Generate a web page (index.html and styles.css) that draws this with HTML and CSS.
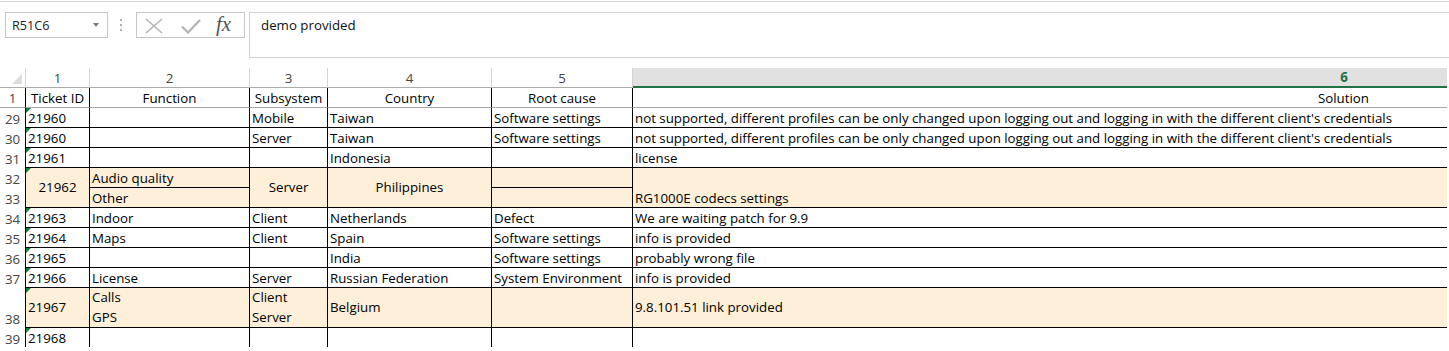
FILE: index.html
```html
<!DOCTYPE html>
<html>
<head>
<meta charset="utf-8">
<link rel="stylesheet" href="styles.css">
</head>
<body>
<div class="topline"></div>
<div class="fbar">
  <div class="namebox"><span>R51C6</span><span class="caret"></span></div>
  <div class="grip"><i></i><i></i><i></i></div>
  <div class="btns">
    <svg class="ico-x" width="18" height="16" viewBox="0 0 18 16"><path d="M1 1 L17 15 M17 1 L1 15" stroke="#b4b4b4" stroke-width="1.6" fill="none"/></svg>
    <svg class="ico-ok" width="20" height="16" viewBox="0 0 20 16"><path d="M1 8.5 L7 14.5 L19 2" stroke="#b4b4b4" stroke-width="2.3" fill="none"/></svg>
    <span class="fx">fx</span>
  </div>
  <div class="finput">demo provided</div>
</div>
<div class="sheet">
  <div class="grid">
    <div class="corner"><span class="corner-tri"></span></div>
    <div class="ch">1</div>
    <div class="ch">2</div>
    <div class="ch">3</div>
    <div class="ch">4</div>
    <div class="ch">5</div>
    <div class="ch sel">6</div>

    <div class="rh r1">1</div>
    <div class="c r1 hc">Ticket ID</div>
    <div class="c r1 hc">Function</div>
    <div class="c r1 hc">Subsystem</div>
    <div class="c r1 hc">Country</div>
    <div class="c r1 hc">Root cause</div>
    <div class="c r1 hc">Solution</div>

    <div class="rh">29</div>
    <div class="c tri">21960</div>
    <div class="c"></div>
    <div class="c">Mobile</div>
    <div class="c">Taiwan</div>
    <div class="c">Software settings</div>
    <div class="c">not supported, different profiles can be only changed upon logging out and logging in with the different client's credentials</div>

    <div class="rh">30</div>
    <div class="c tri">21960</div>
    <div class="c"></div>
    <div class="c">Server</div>
    <div class="c">Taiwan</div>
    <div class="c">Software settings</div>
    <div class="c">not supported, different profiles can be only changed upon logging out and logging in with the different client's credentials</div>

    <div class="rh">31</div>
    <div class="c tri">21961</div>
    <div class="c"></div>
    <div class="c"></div>
    <div class="c">Indonesia</div>
    <div class="c"></div>
    <div class="c">license</div>

    <div class="rh">32</div>
    <div class="c tri fill span2 mid hc">21962</div>
    <div class="c fill">Audio quality</div>
    <div class="c fill span2 mid hc">Server</div>
    <div class="c fill span2 mid hc">Philippines</div>
    <div class="c fill"></div>
    <div class="c fill span2">RG1000E codecs settings</div>
    <div class="rh">33</div>
    <div class="c fill">Other</div>
    <div class="c fill"></div>

    <div class="rh">34</div>
    <div class="c tri">21963</div>
    <div class="c">Indoor</div>
    <div class="c">Client</div>
    <div class="c">Netherlands</div>
    <div class="c">Defect</div>
    <div class="c">We are waiting patch for 9.9</div>

    <div class="rh">35</div>
    <div class="c tri">21964</div>
    <div class="c">Maps</div>
    <div class="c">Client</div>
    <div class="c">Spain</div>
    <div class="c">Software settings</div>
    <div class="c">info is provided</div>

    <div class="rh">36</div>
    <div class="c tri">21965</div>
    <div class="c"></div>
    <div class="c"></div>
    <div class="c">India</div>
    <div class="c">Software settings</div>
    <div class="c">probably wrong file</div>

    <div class="rh">37</div>
    <div class="c tri">21966</div>
    <div class="c">License</div>
    <div class="c">Server</div>
    <div class="c">Russian Federation</div>
    <div class="c">System Environment</div>
    <div class="c">info is provided</div>

    <div class="rh">38</div>
    <div class="c tri fill mid">21967</div>
    <div class="c fill wrap">Calls<br>GPS</div>
    <div class="c fill wrap">Client<br>Server</div>
    <div class="c fill mid">Belgium</div>
    <div class="c fill"></div>
    <div class="c fill mid">9.8.101.51 link provided</div>

    <div class="rh last">39</div>
    <div class="c tri last">21968</div>
    <div class="c last"></div>
    <div class="c last"></div>
    <div class="c last"></div>
    <div class="c last"></div>
    <div class="c last"></div>
  </div>
</div>
</body>
</html>
```

FILE: styles.css
```css
html, body {
  margin: 0;
  padding: 0;
  background: #fff;
}
body {
  font-family: "Open Sans", "Liberation Sans", sans-serif;
  font-size: 13.3px;
  color: #000;
  overflow: hidden;
}
.topline {
  height: 1px;
  margin-top: 1px;
  background: #d6d6d6;
}
.fbar {
  display: flex;
  align-items: flex-start;
  margin-top: 10px;
  height: 46px;
}
.namebox {
  box-sizing: border-box;
  margin-left: 5px;
  width: 103px;
  height: 26px;
  border: 1px solid #c6c6c6;
  display: flex;
  align-items: center;
  padding-left: 6px;
  color: #222;
  font-size: 12.7px;
}
.caret {
  margin-left: auto;
  margin-right: 8px;
  width: 0;
  height: 0;
  border-left: 3.5px solid transparent;
  border-right: 3.5px solid transparent;
  border-top: 4px solid #7a7a7a;
}
.grip {
  margin-left: 12px;
  margin-top: 7px;
  display: flex;
  flex-direction: column;
  gap: 3px;
}
.grip i {
  display: block;
  width: 2px;
  height: 2px;
  background: #b0b0b0;
}
.btns {
  box-sizing: border-box;
  margin-left: 14px;
  width: 109px;
  height: 26px;
  border: 1px solid #c6c6c6;
  display: flex;
  align-items: center;
  padding-left: 8px;
}
.ico-x { margin-top: 1px; }
.ico-ok { margin-left: 18px; margin-top: 2px; }
.fx {
  margin-left: 15px;
  font-family: "Liberation Serif", "DejaVu Serif", serif;
  font-style: italic;
  font-size: 21px;
  color: #555;
  line-height: 1;
  margin-top: -1px;
}
.finput {
  box-sizing: border-box;
  margin-left: 4px;
  flex: 1;
  height: 46px;
  border: 1px solid #d2d2d2;
  border-right: none;
  padding: 3px 0 0 11px;
  color: #111;
}
.sheet {
  margin-top: 10px;
  width: 1447px;
  height: 279px;
  overflow: hidden;
}
.grid {
  display: grid;
  grid-template-columns: 26px 64px 160px 78px 164px 141px 1422px;
  grid-template-rows: repeat(11, 20px) 40px 20px;
  line-height: 17px;
}
.grid > div {
  box-sizing: border-box;
  display: flex;
  align-items: flex-end;
  white-space: nowrap;
  overflow: hidden;
  position: relative;
}
.corner {
  border-right: 1px solid #d4d4d4;
  border-bottom: 1px solid #ababab;
}
.corner-tri {
  position: absolute;
  right: 3px;
  bottom: 3px;
  width: 0;
  height: 0;
  border-left: 10px solid transparent;
  border-bottom: 10px solid #dcdcdc;
}
.ch {
  justify-content: center;
  color: #444;
  border-right: 1px solid #d4d4d4;
  border-bottom: 1px solid #ababab;
}
.ch.sel {
  background: #e1e1e1;
  color: #217346;
  font-weight: 700;
  border-bottom: 2px solid #217346;
  border-right: none;
}
.rh {
  justify-content: center;
  color: #444;
  border-right: 1px solid #000;
}
.rh.r1 {
  border-bottom: 1px solid #a8a8a8;
}
.c {
  border-right: 1px solid #000;
  border-bottom: 1px solid #000;
  padding: 0 2px;
}
.c.r1 {
  border-bottom: 1px solid #a8a8a8;
}
.c.last {
  border-bottom: none;
  padding-bottom: 1px;
}
.hc {
  justify-content: center;
}
.fill {
  background: #fdefd8;
}
.span2 {
  grid-row: span 2;
}
.grid > .mid {
  align-items: center;
}
.grid > .wrap {
  line-height: 20px;
}
.tri::before {
  content: "";
  position: absolute;
  left: 0;
  top: 0;
  width: 0;
  height: 0;
  border-top: 5px solid #1d7a34;
  border-right: 5px solid transparent;
}
```
